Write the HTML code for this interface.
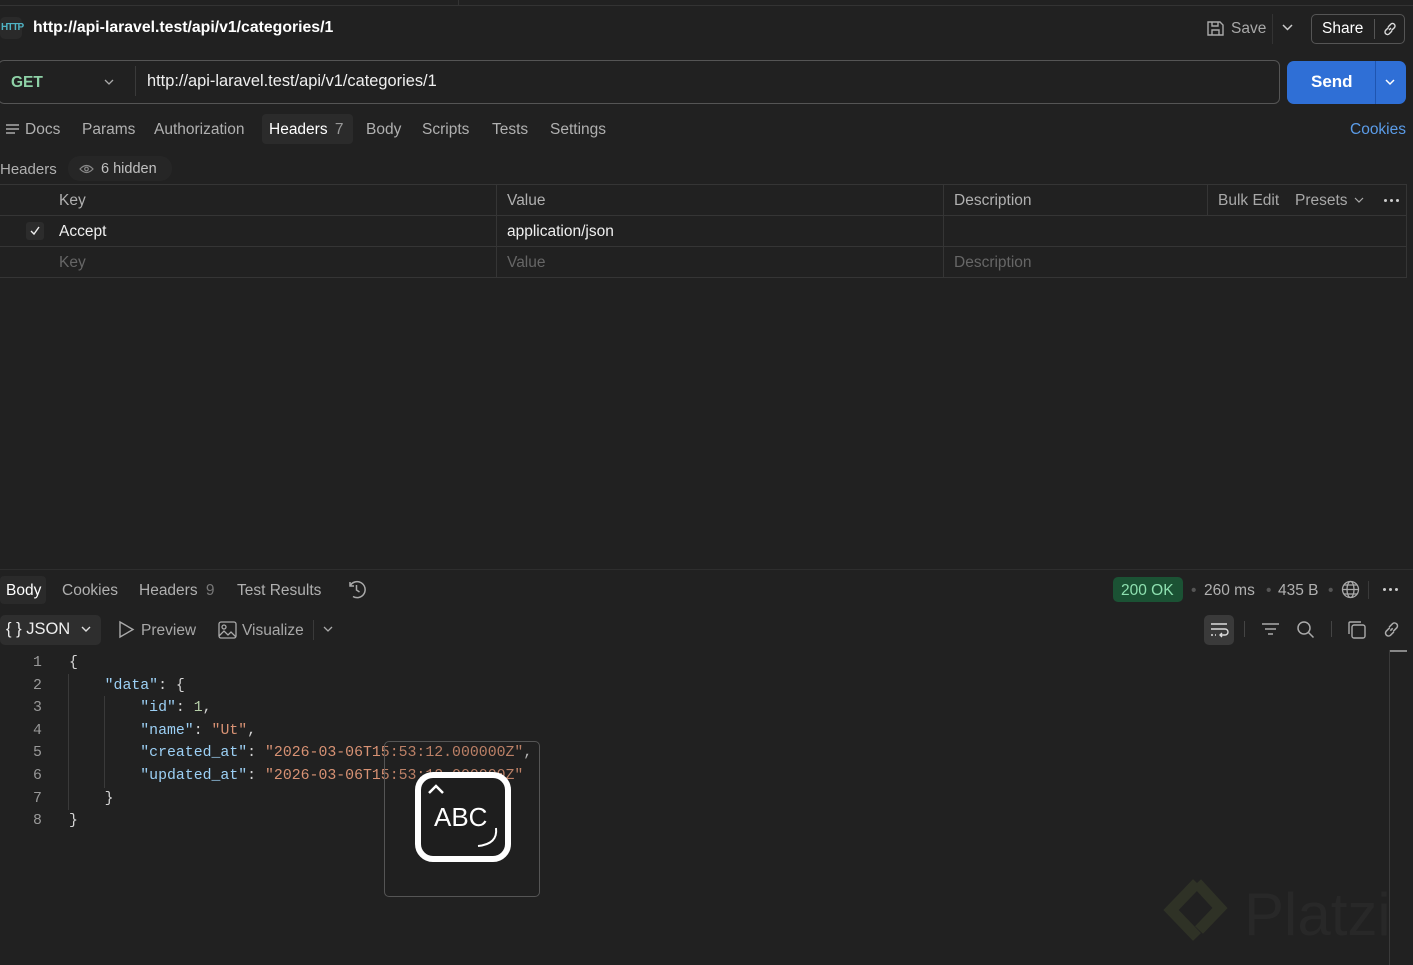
<!DOCTYPE html>
<html><head><meta charset="utf-8"><style>
*{margin:0;padding:0;box-sizing:border-box}
body{width:1413px;height:965px;background:#212121;color:#d0d0d0;font-family:"Liberation Sans",sans-serif;font-size:15.5px;position:relative;overflow:hidden}
.a{position:absolute;white-space:nowrap}
.mono{font-family:"Liberation Mono",monospace;font-size:14.85px;white-space:pre}
.k{color:#9cd0f5}.s{color:#d89274}.n{color:#b5cea8}.p{color:#d4d4d4}
.dots{display:flex;gap:3px}.dots i{width:3px;height:3px;border-radius:50%;background:#ccc;display:block}
</style></head><body>
<div class="a" style="left:0;top:5px;width:1413px;height:1px;background:#333"></div>
<div class="a" style="left:458px;top:0;width:1px;height:5px;background:#333"></div>
<!-- title -->
<div class="a" style="left:0;top:17px;width:22px;height:22px;border-radius:5px;background:#2a2a2a"></div>
<div class="a" style="left:1px;top:22px;font-size:10px;color:#4fb3c4;font-weight:bold;letter-spacing:-1px">HTTP</div>
<div class="a" style="left:33px;top:19px;color:#fff;font-weight:bold;font-size:15.8px">http://api-laravel.test/api/v1/categories/1</div>
<svg class="a" style="left:1206px;top:19px" width="19" height="19" viewBox="0 0 19 19" fill="none" stroke="#aaa" stroke-width="1.4"><path d="M2 3h12l3 3v10H2z"/><path d="M6 3v4h6V3M6 16v-5h7v5"/></svg>
<div class="a" style="left:1231px;top:20px;color:#a8a8a8">Save</div>
<div class="a" style="left:1272px;top:14px;width:1px;height:30px;background:#333"></div>
<svg class="a" style="left:1282px;top:24px" width="11" height="8" viewBox="0 0 11 8" fill="none" stroke="#ccc" stroke-width="1.5"><path d="M1 1l4.5 4.5L10 1"/></svg>
<div class="a" style="left:1311px;top:14px;width:94px;height:30px;border:1px solid #555;border-radius:5px"></div>
<div class="a" style="left:1322px;top:20px;color:#fff">Share</div>
<div class="a" style="left:1374px;top:19px;width:1px;height:20px;background:#555"></div>
<svg class="a" style="left:1382px;top:21px" width="16" height="16" viewBox="0 0 16 16" fill="none" stroke="#ddd" stroke-width="1.4"><path d="M7 9l2-2M6 6l3-3a2.5 2.5 0 013.5 3.5l-3 3M10 10l-3 3A2.5 2.5 0 013.5 9.5l3-3"/></svg>
<!-- url bar -->
<div class="a" style="left:-2px;top:60px;width:1282px;height:44px;border:1px solid #555;border-radius:6px"></div>
<div class="a" style="left:11px;top:74px;font-weight:bold;font-size:15.5px;color:#8ed1a6">GET</div>
<svg class="a" style="left:104px;top:79px" width="10" height="7" viewBox="0 0 10 7" fill="none" stroke="#aaa" stroke-width="1.3"><path d="M1 1l4 4 4-4"/></svg>
<div class="a" style="left:135px;top:66px;width:1px;height:30px;background:#3a3a3a"></div>
<div class="a" style="left:147px;top:72px;color:#f0f0f0;font-size:16.4px">http://api-laravel.test/api/v1/categories/1</div>
<div class="a" style="left:1287px;top:61px;width:119px;height:43px;border-radius:7px;background:#2f6fd6"></div>
<div class="a" style="left:1375px;top:61px;width:1px;height:43px;background:#1f55b0"></div>
<div class="a" style="left:1311px;top:72px;color:#fff;font-weight:bold;font-size:17px">Send</div>
<svg class="a" style="left:1385px;top:79px" width="10" height="7" viewBox="0 0 10 7" fill="none" stroke="#fff" stroke-width="1.5"><path d="M1 1l4 4 4-4"/></svg>
<!-- tabs -->
<svg class="a" style="left:6px;top:123px" width="14" height="13" viewBox="0 0 14 13" stroke="#aaa" stroke-width="1.4"><path d="M0 2h13M0 6h13M0 10h9"/></svg>
<div class="a" style="left:25px;top:121px;color:#b0b0b0">Docs</div>
<div class="a" style="left:82px;top:121px;color:#b0b0b0">Params</div>
<div class="a" style="left:154px;top:121px;color:#b0b0b0">Authorization</div>
<div class="a" style="left:262px;top:114px;width:91px;height:30px;border-radius:4px;background:#2b2b2b"></div>
<div class="a" style="left:269px;top:121px;color:#fff">Headers <span style="color:#999;margin-left:3px">7</span></div>
<div class="a" style="left:366px;top:121px;color:#b0b0b0">Body</div>
<div class="a" style="left:422px;top:121px;color:#b0b0b0">Scripts</div>
<div class="a" style="left:492px;top:121px;color:#b0b0b0">Tests</div>
<div class="a" style="left:550px;top:121px;color:#b0b0b0">Settings</div>
<div class="a" style="left:1350px;top:121px;color:#5b9ce8">Cookies</div>
<div class="a" style="left:0;top:161px;color:#b0b0b0;font-size:15px">Headers</div>
<div class="a" style="left:68px;top:156px;width:104px;height:25px;border-radius:12px;background:#262626"></div>
<svg class="a" style="left:79px;top:164px" width="15" height="10" viewBox="0 0 15 10" fill="none" stroke="#888" stroke-width="1.2"><path d="M1 5q6.5-7 13 0q-6.5 7-13 0z"/><circle cx="7.5" cy="5" r="1.8"/></svg>
<div class="a" style="left:101px;top:161px;color:#c0c0c0;font-size:14.5px">6 hidden</div>
<!-- table -->
<div class="a" style="left:0;top:184px;width:1407px;height:94px;border:1px solid #353535;border-left:none"></div>
<div class="a" style="left:0;top:215px;width:1407px;height:1px;background:#353535"></div>
<div class="a" style="left:0;top:246px;width:1407px;height:1px;background:#353535"></div>
<div class="a" style="left:496px;top:184px;width:1px;height:94px;background:#353535"></div>
<div class="a" style="left:943px;top:184px;width:1px;height:94px;background:#353535"></div>
<div class="a" style="left:1207px;top:184px;width:1px;height:31px;background:#353535"></div>
<div class="a" style="left:59px;top:192px;color:#b0b0b0">Key</div>
<div class="a" style="left:507px;top:192px;color:#b0b0b0">Value</div>
<div class="a" style="left:954px;top:192px;color:#b0b0b0">Description</div>
<div class="a" style="left:1218px;top:192px;color:#a8a8a8">Bulk Edit</div>
<div class="a" style="left:1295px;top:192px;color:#a8a8a8">Presets</div>
<svg class="a" style="left:1354px;top:197px" width="10" height="7" viewBox="0 0 10 7" fill="none" stroke="#aaa" stroke-width="1.2"><path d="M1 1l4 4 4-4"/></svg>
<div class="a dots" style="left:1384px;top:199px"><i></i><i></i><i></i></div>
<div class="a" style="left:26px;top:222px;width:18px;height:18px;border-radius:3px;background:#2c2c2c"></div>
<svg class="a" style="left:29px;top:225px" width="12" height="12" viewBox="0 0 12 12" fill="none" stroke="#eee" stroke-width="1.4"><path d="M2 6l3 3 5-7"/></svg>
<div class="a" style="left:59px;top:223px;color:#f0f0f0">Accept</div>
<div class="a" style="left:507px;top:223px;color:#f0f0f0">application/json</div>
<div class="a" style="left:59px;top:254px;color:#666">Key</div>
<div class="a" style="left:507px;top:254px;color:#666">Value</div>
<div class="a" style="left:954px;top:254px;color:#666">Description</div>
<!-- response -->
<div class="a" style="left:0;top:569px;width:1413px;height:1px;background:#2e2e2e"></div>
<div class="a" style="left:0;top:576px;width:46px;height:28px;border-radius:4px;background:#2a2a2a"></div>
<div class="a" style="left:6px;top:582px;color:#fff">Body</div>
<div class="a" style="left:62px;top:582px;color:#b0b0b0">Cookies</div>
<div class="a" style="left:139px;top:582px;color:#b0b0b0">Headers <span style="color:#777;margin-left:4px">9</span></div>
<div class="a" style="left:237px;top:582px;color:#b0b0b0">Test Results</div>
<svg class="a" style="left:346px;top:579px" width="21" height="21" viewBox="0 0 21 21" fill="none" stroke="#aaa" stroke-width="1.5"><path d="M4 7a8 8 0 113 10.5M4 3v4h4M10.5 6v5l3 2"/></svg>
<div class="a" style="left:1113px;top:577px;width:70px;height:25px;border-radius:5px;background:#1b5234"></div>
<div class="a" style="left:1121px;top:582px;color:#8ee0b0">200 OK</div>
<div class="a" style="left:1191px;top:582px;color:#555">•</div>
<div class="a" style="left:1204px;top:582px;color:#b0b0b0">260 ms</div>
<div class="a" style="left:1266px;top:582px;color:#555">•</div>
<div class="a" style="left:1278px;top:582px;color:#b0b0b0">435 B</div>
<div class="a" style="left:1328px;top:582px;color:#555">•</div>
<svg class="a" style="left:1341px;top:580px" width="19" height="19" viewBox="0 0 19 19" fill="none" stroke="#aaa" stroke-width="1.3"><circle cx="9.5" cy="9.5" r="8"/><ellipse cx="9.5" cy="9.5" rx="3.5" ry="8"/><path d="M1.5 9.5h16M3 5h13M3 14h13"/></svg>
<div class="a" style="left:1368px;top:581px;width:1px;height:18px;background:#3a3a3a"></div>
<div class="a dots" style="left:1383px;top:588px"><i></i><i></i><i></i></div>
<div class="a" style="left:0;top:615px;width:101px;height:30px;border-radius:5px;background:#2e2e2e"></div>
<div class="a" style="left:6px;top:620px;color:#eee;font-size:16.5px">{ } JSON</div>
<svg class="a" style="left:81px;top:626px" width="10" height="7" viewBox="0 0 10 7" fill="none" stroke="#ddd" stroke-width="1.4"><path d="M1 1l4 4 4-4"/></svg>
<svg class="a" style="left:118px;top:620px" width="17" height="19" viewBox="0 0 17 19" fill="none" stroke="#aaa" stroke-width="1.4"><path d="M2 2l13 7.5L2 17z"/></svg>
<div class="a" style="left:141px;top:622px;color:#a8a8a8">Preview</div>
<svg class="a" style="left:218px;top:621px" width="19" height="18" viewBox="0 0 19 18" fill="none" stroke="#aaa" stroke-width="1.3"><rect x="1" y="1" width="17" height="16" rx="2"/><circle cx="6" cy="6" r="2"/><path d="M1 15l5-5 4 4 3-3 5 5"/></svg>
<div class="a" style="left:242px;top:622px;color:#a8a8a8">Visualize</div>
<div class="a" style="left:313px;top:620px;width:1px;height:20px;background:#3a3a3a"></div>
<svg class="a" style="left:323px;top:626px" width="10" height="7" viewBox="0 0 10 7" fill="none" stroke="#aaa" stroke-width="1.3"><path d="M1 1l4 4 4-4"/></svg>
<div class="a" style="left:1204px;top:615px;width:30px;height:30px;border-radius:5px;background:#3a3a3a"></div>
<svg class="a" style="left:1209px;top:620px" width="20" height="20" viewBox="0 0 20 20" fill="none" stroke="#ddd" stroke-width="1.4"><path d="M2 4h16M2 9h14a3 3 0 010 6h-5M13 13l-2 2 2 2M2 15h2M6 15h1"/></svg>
<div class="a" style="left:1244px;top:621px;width:1px;height:16px;background:#444"></div>
<svg class="a" style="left:1261px;top:622px" width="19" height="14" viewBox="0 0 19 14" stroke="#aaa" stroke-width="1.4"><path d="M1 2h17M4 7h11M7 12h5"/></svg>
<svg class="a" style="left:1296px;top:620px" width="19" height="19" viewBox="0 0 19 19" fill="none" stroke="#aaa" stroke-width="1.5"><circle cx="8" cy="8" r="6"/><path d="M12.5 12.5l5 5"/></svg>
<div class="a" style="left:1331px;top:621px;width:1px;height:16px;background:#444"></div>
<svg class="a" style="left:1347px;top:620px" width="19" height="19" viewBox="0 0 19 19" fill="none" stroke="#aaa" stroke-width="1.4"><rect x="5" y="5" width="13" height="13" rx="2"/><path d="M14 2H3a1 1 0 00-1 1v11"/></svg>
<svg class="a" style="left:1382px;top:620px" width="19" height="19" viewBox="0 0 16 16" fill="none" stroke="#aaa" stroke-width="1.3"><path d="M7 9l2-2M6 6l3-3a2.5 2.5 0 013.5 3.5l-3 3M10 10l-3 3A2.5 2.5 0 013.5 9.5l3-3"/></svg>
<div class="a" style="left:1389px;top:650px;width:18px;height:2px;background:#888"></div>
<div class="a" style="left:1389px;top:650px;width:1px;height:315px;background:#3a3a3a"></div>
<!-- code -->
<div class="a mono" style="left:33px;top:652px;line-height:22.6px;color:#999">1
2
3
4
5
6
7
8</div>
<div class="a" style="left:68px;top:674px;width:1px;height:136px;background:#3a3a3a"></div>
<div class="a" style="left:104px;top:696px;width:1px;height:92px;background:#3a3a3a"></div>
<div class="a mono p" style="left:69px;top:652px;line-height:22.6px">{
    <span class="k">"data"</span>: {
        <span class="k">"id"</span>: <span class="n">1</span>,
        <span class="k">"name"</span>: <span class="s">"Ut"</span>,
        <span class="k">"created_at"</span>: <span class="s">"2026-03-06T15:53:12.000000Z"</span>,
        <span class="k">"updated_at"</span>: <span class="s">"2026-03-06T15:53:12.000000Z"</span>
    }
}</div>
<!-- overlay -->
<div class="a" style="left:384px;top:741px;width:156px;height:156px;border:1px solid #555;border-radius:5px;background:rgba(30,30,30,0.15)"></div>
<div class="a" style="left:415px;top:772px;width:96px;height:90px;border:6px solid #fff;border-radius:18px;background:#1e1e1e"></div>
<svg class="a" style="left:426px;top:783px" width="20" height="12" viewBox="0 0 20 12" fill="none" stroke="#fff" stroke-width="2.5"><path d="M3 10l7-7 7 7"/></svg>
<div class="a" style="left:434px;top:802px;color:#fff;font-size:26px">ABC</div>
<svg class="a" style="left:474px;top:826px" width="26" height="24" viewBox="0 0 26 24" fill="none" stroke="#fff" stroke-width="2"><path d="M22 2q2 16-18 18"/></svg>
<!-- watermark -->
<svg class="a" style="left:1163px;top:877px" width="68" height="78" viewBox="0 0 68 78" fill="none" stroke="#2f3226" stroke-width="11"><path d="M34 6L8 33l26 27M34 6l23 25-21 22"/></svg>
<div class="a" style="left:1244px;top:880px;color:#282828;font-size:60px">Platzi</div>
</body></html>
